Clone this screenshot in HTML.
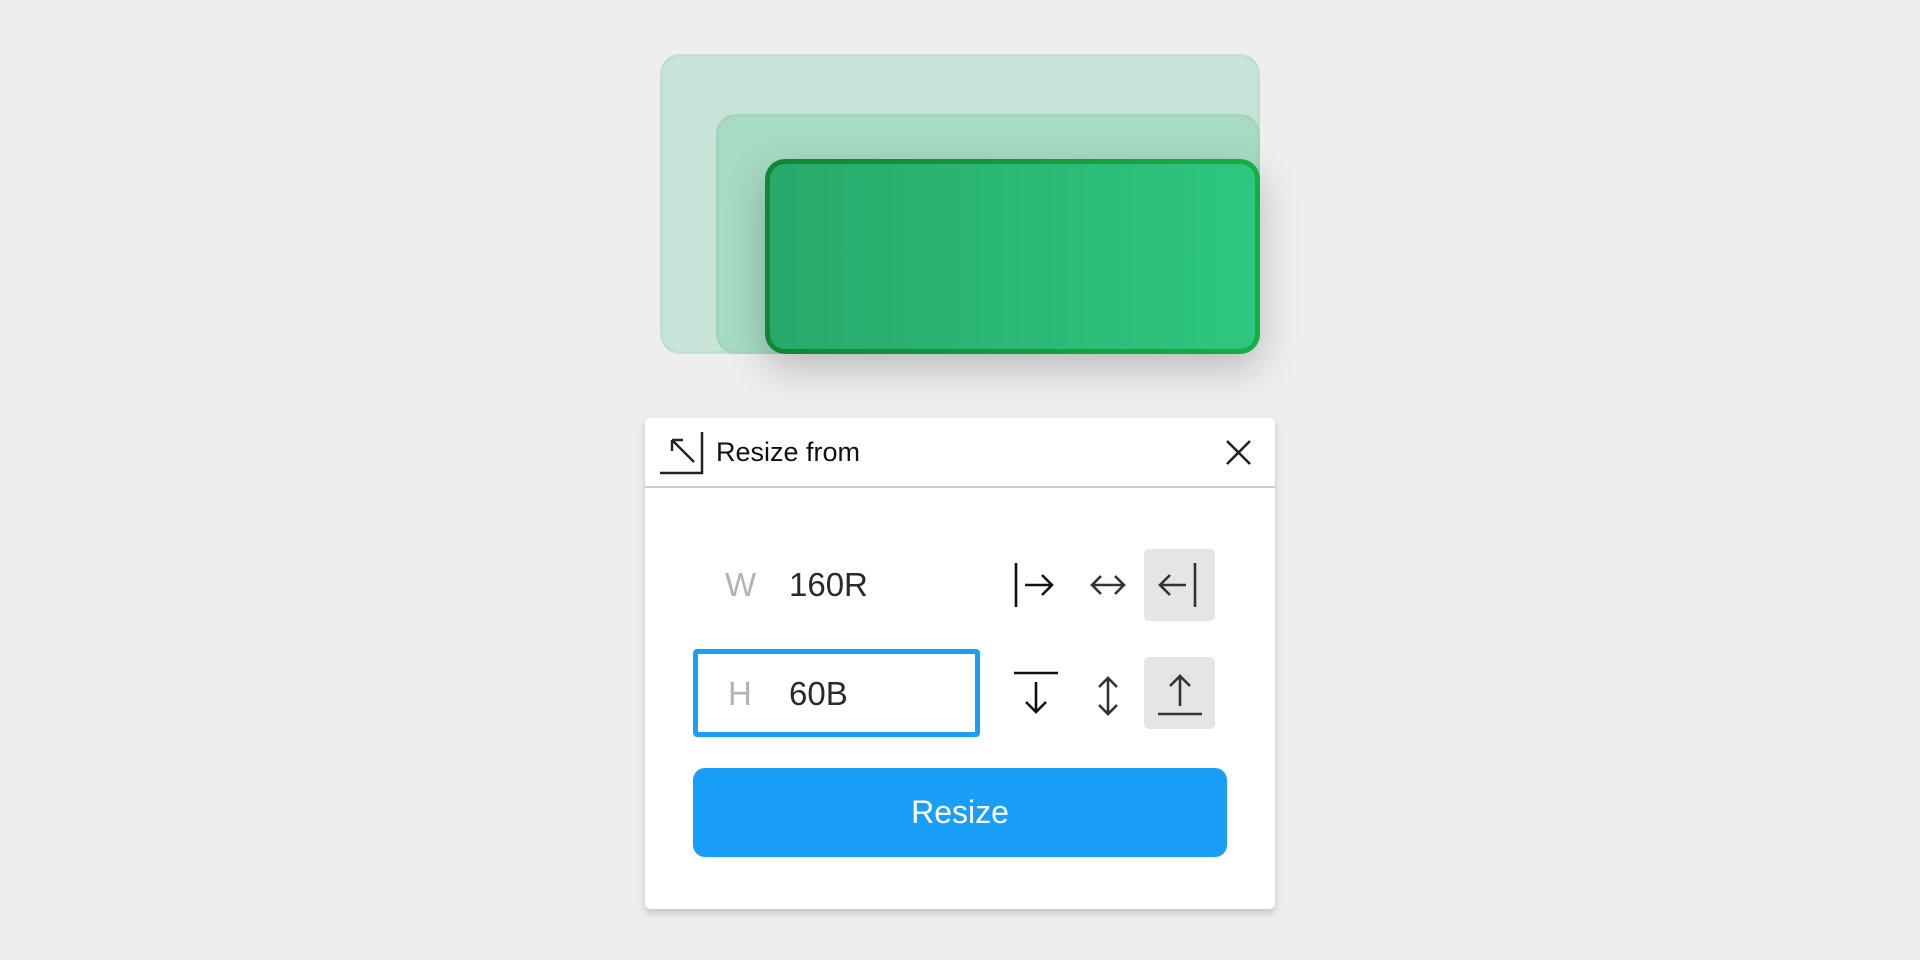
<!DOCTYPE html>
<html><head><meta charset="utf-8"><style>
*{margin:0;padding:0;box-sizing:border-box}
body{width:1920px;height:960px;background:#eeeeee;position:relative;overflow:hidden;font-family:"Liberation Sans",sans-serif}
.r{position:absolute;border-radius:20px}
#back{left:660px;top:54px;width:600px;height:300px;background:#c8e3d7;border:3px solid #c2dfcd}
#mid{left:716px;top:114px;width:544px;height:240px;background:#a7dbc4;border:3px solid #a3d6b9}
#front{position:absolute;left:765px;top:159px;width:495px;height:195px;border-radius:20px;padding:5px;background:linear-gradient(90deg,#138536,#17ad46);box-shadow:0 14px 40px rgba(0,0,0,.22)}
#front div{width:100%;height:100%;border-radius:15px;background:linear-gradient(90deg,#27a96a,#2ec77e)}
#panel{position:absolute;left:645px;top:418px;width:630px;height:491px;background:#fff;border-radius:5px;box-shadow:0 4px 8px rgba(0,0,0,.18)}
#div{position:absolute;left:0;right:0;top:68px;height:2px;background:#cccccc}
.t{position:absolute;white-space:nowrap}
.btn{position:absolute;width:71px;height:72px;background:#e5e5e5;border-radius:5px}
svg{position:absolute;overflow:visible}
</style></head><body>
<div class="r" id="back"></div>
<div class="r" id="mid"></div>
<div id="front"><div></div></div>
<div id="panel">
<svg style="left:15px;top:14px" width="44" height="44" viewBox="0 0 44 44" fill="none" stroke="#222" stroke-width="2.5">
<path d="M42 0V41H0"/><path d="M34 30L12 8M12 8V19M12 8H23" stroke-width="2.4"/>
</svg>
<div class="t" style="left:71px;top:19px;font-size:27px;color:#111">Resize from</div>
<svg style="left:581px;top:22px" width="25" height="25" viewBox="0 0 25 25" stroke="#222" stroke-width="2.6"><path d="M1 1L24 24M24 1L1 24"/></svg>
<div id="div"></div>
<div class="t" style="left:80px;top:148px;font-size:33px;color:#b3b3b3">W</div>
<div class="t" style="left:144px;top:148px;font-size:33px;color:#2a2a2a">160R</div>
<div style="position:absolute;left:48px;top:231px;width:287px;height:88px;border:5px solid #1a9ff5;border-radius:4px"></div>
<div class="t" style="left:83px;top:257px;font-size:33px;color:#b3b3b3">H</div>
<div class="t" style="left:144px;top:257px;font-size:33px;color:#2a2a2a">60B</div>
<svg style="left:369px;top:145px" width="40" height="44" viewBox="0 0 40 44" fill="none" stroke="#111" stroke-width="2.6"><path d="M2 0V44"/><path d="M11 22H38M28 12L38 22L28 32"/></svg>
<svg style="left:445px;top:154px" width="36" height="26" viewBox="0 0 36 26" fill="none" stroke="#333" stroke-width="2.6"><path d="M2 13H34M11 4L2 13L11 22M25 4L34 13L25 22"/></svg>
<div class="btn" style="left:499px;top:131px"></div>
<svg style="left:513px;top:145px" width="40" height="44" viewBox="0 0 40 44" fill="none" stroke="#333" stroke-width="2.6"><path d="M37 0V44"/><path d="M28 22H2M12 12L2 22L12 32"/></svg>
<svg style="left:369px;top:254px" width="44" height="44" viewBox="0 0 44 44" fill="none" stroke="#111" stroke-width="2.6"><path d="M0 1H44"/><path d="M22 10V40M12 30L22 40L32 30"/></svg>
<svg style="left:449px;top:258px" width="28" height="40" viewBox="0 0 28 40" fill="none" stroke="#333" stroke-width="2.6"><path d="M14 2V38M5 11L14 2L23 11M5 29L14 38L23 29"/></svg>
<div class="btn" style="left:499px;top:239px"></div>
<svg style="left:513px;top:254px" width="44" height="44" viewBox="0 0 44 44" fill="none" stroke="#333" stroke-width="2.6"><path d="M0 42H44"/><path d="M22 34V4M12 14L22 4L32 14"/></svg>
<div style="position:absolute;left:48px;top:350px;width:534px;height:89px;background:#1a9ff9;border-radius:12px;color:#fff;font-size:32px;text-align:center;line-height:89px">Resize</div>
</div>
</body></html>
